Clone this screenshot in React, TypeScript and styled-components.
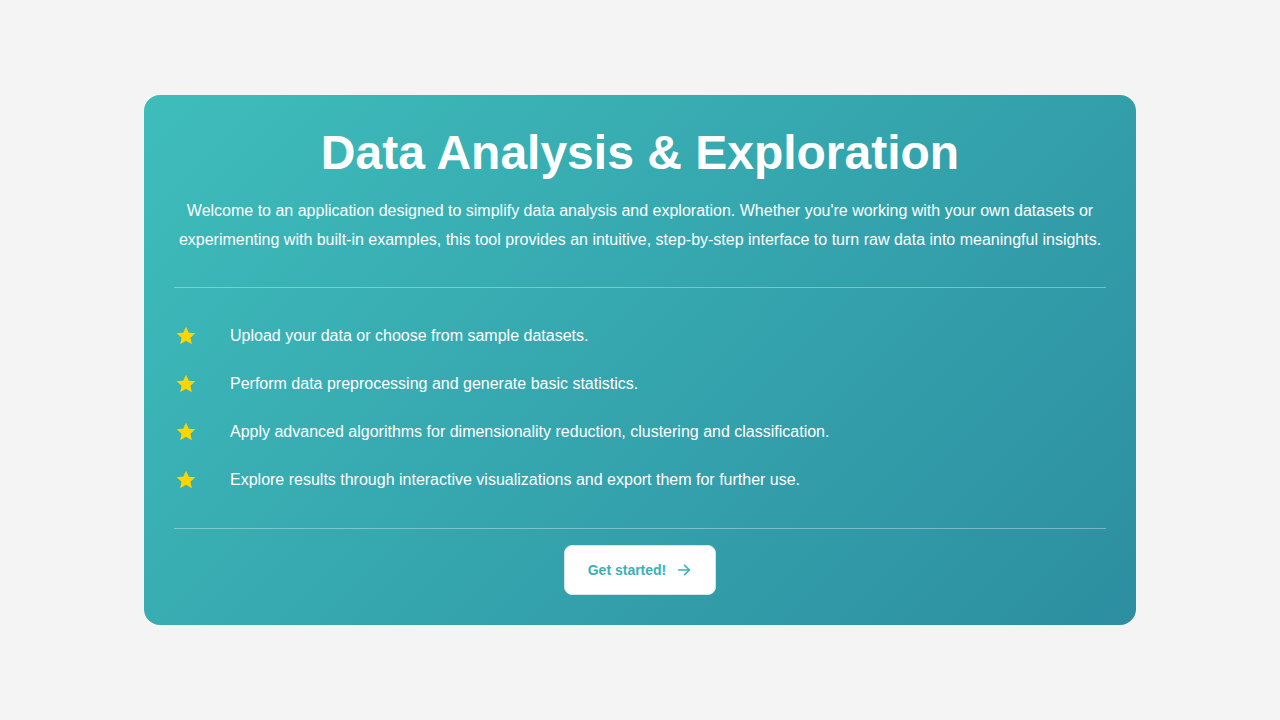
import React from "react";
import styled, { createGlobalStyle } from "styled-components";

const Global = createGlobalStyle`
  html, body { margin: 0; padding: 0; background: #f4f4f4; }
  body { font-family: "Liberation Sans", Arial, sans-serif; }
  * { box-sizing: border-box; }
`;

const Page = styled.div`
  min-height: 720px;
  display: flex;
  align-items: flex-start;
  justify-content: center;
  padding-top: 95px;
`;

const Card = styled.section`
  width: 992px;
  height: 530px;
  border-radius: 16px;
  background: linear-gradient(135deg, #3ebdbb 0%, #2c8ea0 100%);
  padding: 30px 30px 30px;
  color: #ffffff;
  display: flex;
  flex-direction: column;
`;

const Title = styled.h1`
  margin: 0;
  font-size: 48px;
  font-weight: 700;
  text-align: center;
  line-height: 1.15;
`;

const Intro = styled.p`
  margin: 17px 0 0;
  font-size: 16px;
  line-height: 1.8;
  text-align: center;
`;

const Divider = styled.hr`
  border: none;
  height: 1px;
  background: rgba(255, 255, 255, 0.35);
  margin: ${(p: { $top: number }) => p.$top}px 0 0;
`;

const List = styled.ul`
  list-style: none;
  margin: 0;
  padding: 36px 0 36px;
  display: flex;
  flex-direction: column;
  gap: 24px;
`;

const Item = styled.li`
  display: flex;
  align-items: center;
  font-size: 16px;
  line-height: 24px;
`;

const StarBox = styled.span`
  width: 24px;
  height: 24px;
  margin-right: 32px;
  display: inline-flex;
  align-items: center;
  justify-content: center;
`;

const Footer = styled.div`
  display: flex;
  justify-content: center;
  padding-top: 16px;
`;

const Button = styled.button`
  width: 152px;
  height: 50px;
  border-radius: 8px;
  background: #ffffff;
  border: 1px solid #d5e6e8;
  color: #3ab1b5;
  font-family: "Liberation Sans", Arial, sans-serif;
  font-size: 14px;
  font-weight: 700;
  display: inline-flex;
  align-items: center;
  justify-content: center;
  gap: 10px;
  padding: 1px 0 0;
  cursor: pointer;
`;

const Star = () => (
  <svg width="22" height="22" viewBox="0 0 24 24">
    <path
      d="M12 1.8l3 6.6 7.2.7-5.4 4.8 1.6 7.1L12 17.3l-6.4 3.7 1.6-7.1L1.8 9.1 9 8.4z"
      fill="#ffd500"
    />
  </svg>
);

const Arrow = () => (
  <svg width="16" height="16" viewBox="0 0 24 24" fill="none" stroke="currentColor" strokeWidth="2.4" strokeLinecap="round" strokeLinejoin="round">
    <path d="M4 12h16" />
    <path d="M13 5l7 7-7 7" />
  </svg>
);

const features = [
  "Upload your data or choose from sample datasets.",
  "Perform data preprocessing and generate basic statistics.",
  "Apply advanced algorithms for dimensionality reduction, clustering and classification.",
  "Explore results through interactive visualizations and export them for further use.",
];

export default function App() {
  return (
    <>
      <Global />
      <Page>
        <Card>
          <Title>Data Analysis &amp; Exploration</Title>
          <Intro>
            Welcome to an application designed to simplify data analysis and exploration. Whether you're working with your own datasets or experimenting with built-in examples, this tool provides an intuitive, step-by-step interface to turn raw data into meaningful insights.
          </Intro>
          <Divider $top={32} />
          <List>
            {features.map((f) => (
              <Item key={f}>
                <StarBox>
                  <Star />
                </StarBox>
                {f}
              </Item>
            ))}
          </List>
          <Divider $top={0} />
          <Footer>
            <Button>
              Get started!
              <Arrow />
            </Button>
          </Footer>
        </Card>
      </Page>
    </>
  );
}
